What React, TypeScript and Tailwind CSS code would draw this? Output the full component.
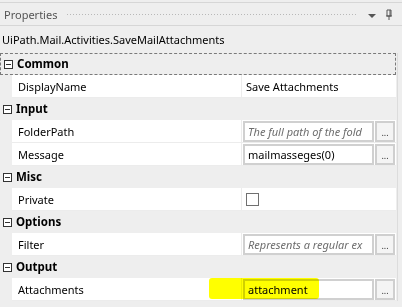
import React from "react";

const Minus = () => (
  <div className="w-[9px] h-[9px] border border-[#333] bg-white flex items-center justify-center shrink-0">
    <div className="w-[5px] h-[1px] bg-[#333]" />
  </div>
);

const Header = ({ label, focused }: { label: string; focused?: boolean }) => (
  <div
    className={
      "h-[22px] flex items-center pl-[3px] " +
      (focused ? "border border-dashed border-[#7a7a7a]" : "")
    }
  >
    <Minus />
    <span className="ml-[4px] font-bold text-black text-[11.5px]">{label}</span>
  </div>
);

const Button = () => (
  <div className="w-[20px] h-[21px] ml-[1px] border-2 border-[#cfcfcf] bg-[#f4f4f4] flex items-end justify-center pb-[3px] text-[9px] leading-none text-[#333]">
    ...
  </div>
);

const Row = ({ name, children }: { name: string; children?: React.ReactNode }) => (
  <div className="h-[23px] flex ml-[12px] border-b border-[#ececec]">
    <div className="w-[229px] bg-white flex items-center pl-[6px] text-black">{name}</div>
    <div className="w-[1px] bg-[#ececec]" />
    <div className="flex-1 bg-white flex items-center">{children}</div>
  </div>
);

const TextBox = ({ text, placeholder }: { text: string; placeholder?: boolean }) => (
  <div className="flex items-center h-[23px] pl-[1px]">
    <div
      className={
        "w-[131px] h-[21px] border-2 border-[#d0d0d0] flex items-center pl-[3px] overflow-hidden whitespace-nowrap " +
        (placeholder ? "italic text-[#6d6d6d]" : "text-black")
      }
    >
      {text}
    </div>
    <Button />
  </div>
);

export default function App() {
  return (
    <div
      className="w-[402px] h-[307px] bg-[#eeeeee] relative overflow-hidden text-[11px] leading-none"
      style={{ fontFamily: "'Segoe UI', 'Noto Sans', 'Open Sans', sans-serif" }}
    >
      <div className="pt-[2px]">
        <div className="h-[24px] border-t border-b border-[#d6d6d6] flex items-center pl-[4px] pr-[8px]">
          <span className="text-[#555] text-[11px]">Properties</span>
          <div
            className="flex-1 h-[4px] mx-[9px] mt-[2px]"
            style={{
              backgroundImage: "radial-gradient(circle, #b8b8b8 0.6px, transparent 0.8px)",
              backgroundSize: "3px 3px",
            }}
          />
          <svg width="10" height="6" viewBox="0 0 10 6" className="mr-[7px] mt-[4px]">
            <path d="M1 1 H9 L5 5 Z" fill="#555" />
          </svg>
          <svg width="10" height="12" viewBox="0 0 10 12" className="mt-[1px]">
            <path d="M3 1 H7 V7 H3 Z M2 7 H8 M5 7 V11 M6 1 V7" stroke="#555" strokeWidth="1" fill="none" />
          </svg>
        </div>
      </div>
      <div className="h-[27px] flex items-center pl-[2px] text-black text-[11px]">
        UiPath.Mail.Activities.SaveMailAttachments
      </div>
      <div className="flex">
        <div className="w-[396px]">
          <Header label="Common" focused />
          <Row name="DisplayName">
            <span className="pl-[4px]">Save Attachments</span>
          </Row>
          <Header label="Input" />
          <Row name="FolderPath">
            <TextBox text="The full path of the fold" placeholder />
          </Row>
          <Row name="Message">
            <TextBox text="mailmasseges(0)" />
          </Row>
          <Header label="Misc" />
          <Row name="Private">
            <div className="ml-[4px] w-[13px] h-[13px] border border-[#707070] bg-white" />
          </Row>
          <Header label="Options" />
          <Row name="Filter">
            <TextBox text="Represents a regular ex" placeholder />
          </Row>
          <Header label="Output" />
          <Row name="Attachments">
            <TextBox text="attachment" />
          </Row>
        </div>
        <div className="w-[1px] bg-[#dcdcdc] ml-[1px]" />
      </div>
      <div className="absolute left-[209px] top-[278px] w-[110px] h-[21px] bg-[#ffff00] mix-blend-multiply rounded-[3px]" />
    </div>
  );
}
